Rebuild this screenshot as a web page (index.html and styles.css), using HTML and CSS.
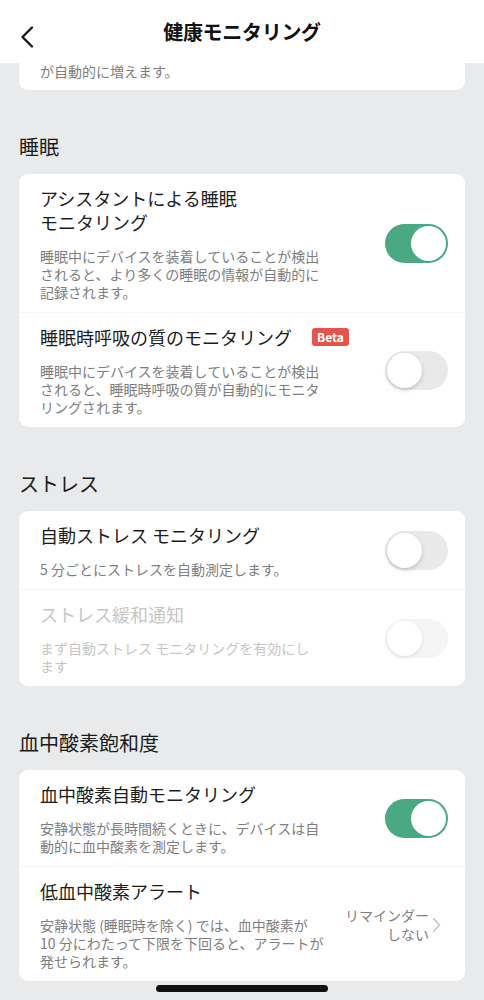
FILE: index.html
```html
<!DOCTYPE html>
<html lang="ja">

<head>
    <meta charset="UTF-8">
    <meta name="viewport" content="width=device-width, initial-scale=1.0">
    <title>健康モニタリング</title>
    <link rel="stylesheet" href="styles.css">
</head>

<body>
    <header class="topbar">
        <button class="back-btn" aria-label="戻る">
            <svg width="16" height="24" viewBox="0 0 16 24">
                <path d="M13 2.5 L3.5 12 L13 21.5" fill="none" stroke="#1a1a1a" stroke-width="2.4" stroke-linecap="round" stroke-linejoin="round" />
            </svg>
        </button>
        <h1>健康モニタリング</h1>
    </header>

    <main class="content">
        <div class="card card-cut">
            <p class="desc">が自動的に増えます。</p>
        </div>

        <h2 class="section-title">睡眠</h2>
        <div class="card">
            <div class="item">
                <div class="info">
                    <div class="title">アシスタントによる睡眠<br>モニタリング</div>
                    <p class="desc">睡眠中にデバイスを装着していることが検出されると、より多くの睡眠の情報が自動的に記録されます。</p>
                </div>
                <span class="toggle on"></span>
            </div>
            <div class="item">
                <div class="info">
                    <div class="title">睡眠時呼吸の質のモニタリング <span class="badge">Beta</span></div>
                    <p class="desc">睡眠中にデバイスを装着していることが検出されると、睡眠時呼吸の質が自動的にモニタリングされます。</p>
                </div>
                <span class="toggle"></span>
            </div>
        </div>

        <h2 class="section-title">ストレス</h2>
        <div class="card">
            <div class="item">
                <div class="info">
                    <div class="title">自動ストレス モニタリング</div>
                    <p class="desc">5 分ごとにストレスを自動測定します。</p>
                </div>
                <span class="toggle"></span>
            </div>
            <div class="item disabled">
                <div class="info">
                    <div class="title">ストレス緩和通知</div>
                    <p class="desc">まず自動ストレス モニタリングを有効にし<br>ます</p>
                </div>
                <span class="toggle"></span>
            </div>
        </div>

        <h2 class="section-title">血中酸素飽和度</h2>
        <div class="card">
            <div class="item">
                <div class="info">
                    <div class="title">血中酸素自動モニタリング</div>
                    <p class="desc">安静状態が長時間続くときに、デバイスは自動的に血中酸素を測定します。</p>
                </div>
                <span class="toggle on"></span>
            </div>
            <div class="item">
                <div class="info">
                    <div class="title">低血中酸素アラート</div>
                    <p class="desc">安静状態 (睡眠時を除く) では、血中酸素が<br>10 分にわたって下限を下回ると、アラートが発せられます。</p>
                </div>
                <div class="value">
                    <span>リマインダー<br>しない</span>
                    <svg width="9" height="16" viewBox="0 0 9 16">
                        <path d="M1.5 1.5 L7.5 8 L1.5 14.5" fill="none" stroke="#c4c4c4" stroke-width="1.5" stroke-linecap="round" stroke-linejoin="round" />
                    </svg>
                </div>
            </div>
        </div>
    </main>

    <div class="home-indicator"></div>
</body>

</html>
```

FILE: styles.css
```css
body {
    margin: 0;
    font-family: "Noto Sans CJK JP", "Noto Sans", sans-serif;
    background-color: #e8eaeb;
    color: #1c1c1c;
}

.topbar {
    height: 63px;
    background: white;
    display: flex;
    align-items: center;
    justify-content: center;
    position: relative;
}

.topbar h1 {
    margin: 0;
    font-size: 20px;
    font-weight: 700;
    color: #111;
    letter-spacing: -0.3px;
}

.back-btn {
    position: absolute;
    left: 19px;
    top: 25px;
    background: none;
    border: none;
    padding: 0;
    display: flex;
}

.content {
    padding: 0 19px 20px;
}

.card {
    background: white;
    border-radius: 9px;
}

.card-cut {
    border-radius: 0 0 9px 9px;
    padding: 0 21px 11px;
}

.section-title {
    margin: 43px 0 13px;
    font-size: 20px;
    font-weight: 400;
    line-height: 28px;
}

.item {
    display: flex;
    align-items: center;
    justify-content: space-between;
    padding: 12px 17px 11px 21px;
    border-top: 1px solid #f4f4f4;
}

.item:first-child {
    border-top: none;
}

.info {
    width: 284px;
}

.title {
    font-size: 18px;
    line-height: 24px;
    display: flex;
    align-items: center;
    white-space: nowrap;
}

.badge {
    margin-left: 20px;
    background: #e5544c;
    color: white;
    font-size: 12px;
    font-weight: 600;
    line-height: 18px;
    padding: 0 5px;
    border-radius: 3px;
}

.desc {
    margin: 13px 0 0;
    font-size: 14px;
    line-height: 18px;
    color: #7e7e7e;
}

.card-cut .desc {
    margin: 0;
    line-height: 16px;
}

.toggle {
    width: 63px;
    height: 39px;
    border-radius: 20px;
    background: #e9e9ea;
    position: relative;
    flex-shrink: 0;
}

.toggle::after {
    content: "";
    position: absolute;
    top: 2px;
    left: 2px;
    width: 35px;
    height: 35px;
    border-radius: 50%;
    background: white;
    box-shadow: 0 2px 4px rgba(0, 0, 0, 0.18);
}

.toggle.on {
    background: #4aa983;
}

.toggle.on::after {
    left: 26px;
    box-shadow: none;
}

.disabled .title,
.disabled .desc {
    color: #c6c6c6;
}

.disabled .toggle {
    opacity: 0.45;
}

.value {
    display: flex;
    align-items: center;
    gap: 3px;
    margin-right: 7px;
    text-align: right;
    font-size: 14px;
    line-height: 19px;
    color: #808080;
}

.home-indicator {
    position: fixed;
    left: 156px;
    top: 985px;
    width: 172px;
    height: 7px;
    border-radius: 4px;
    background: #111;
}
```
